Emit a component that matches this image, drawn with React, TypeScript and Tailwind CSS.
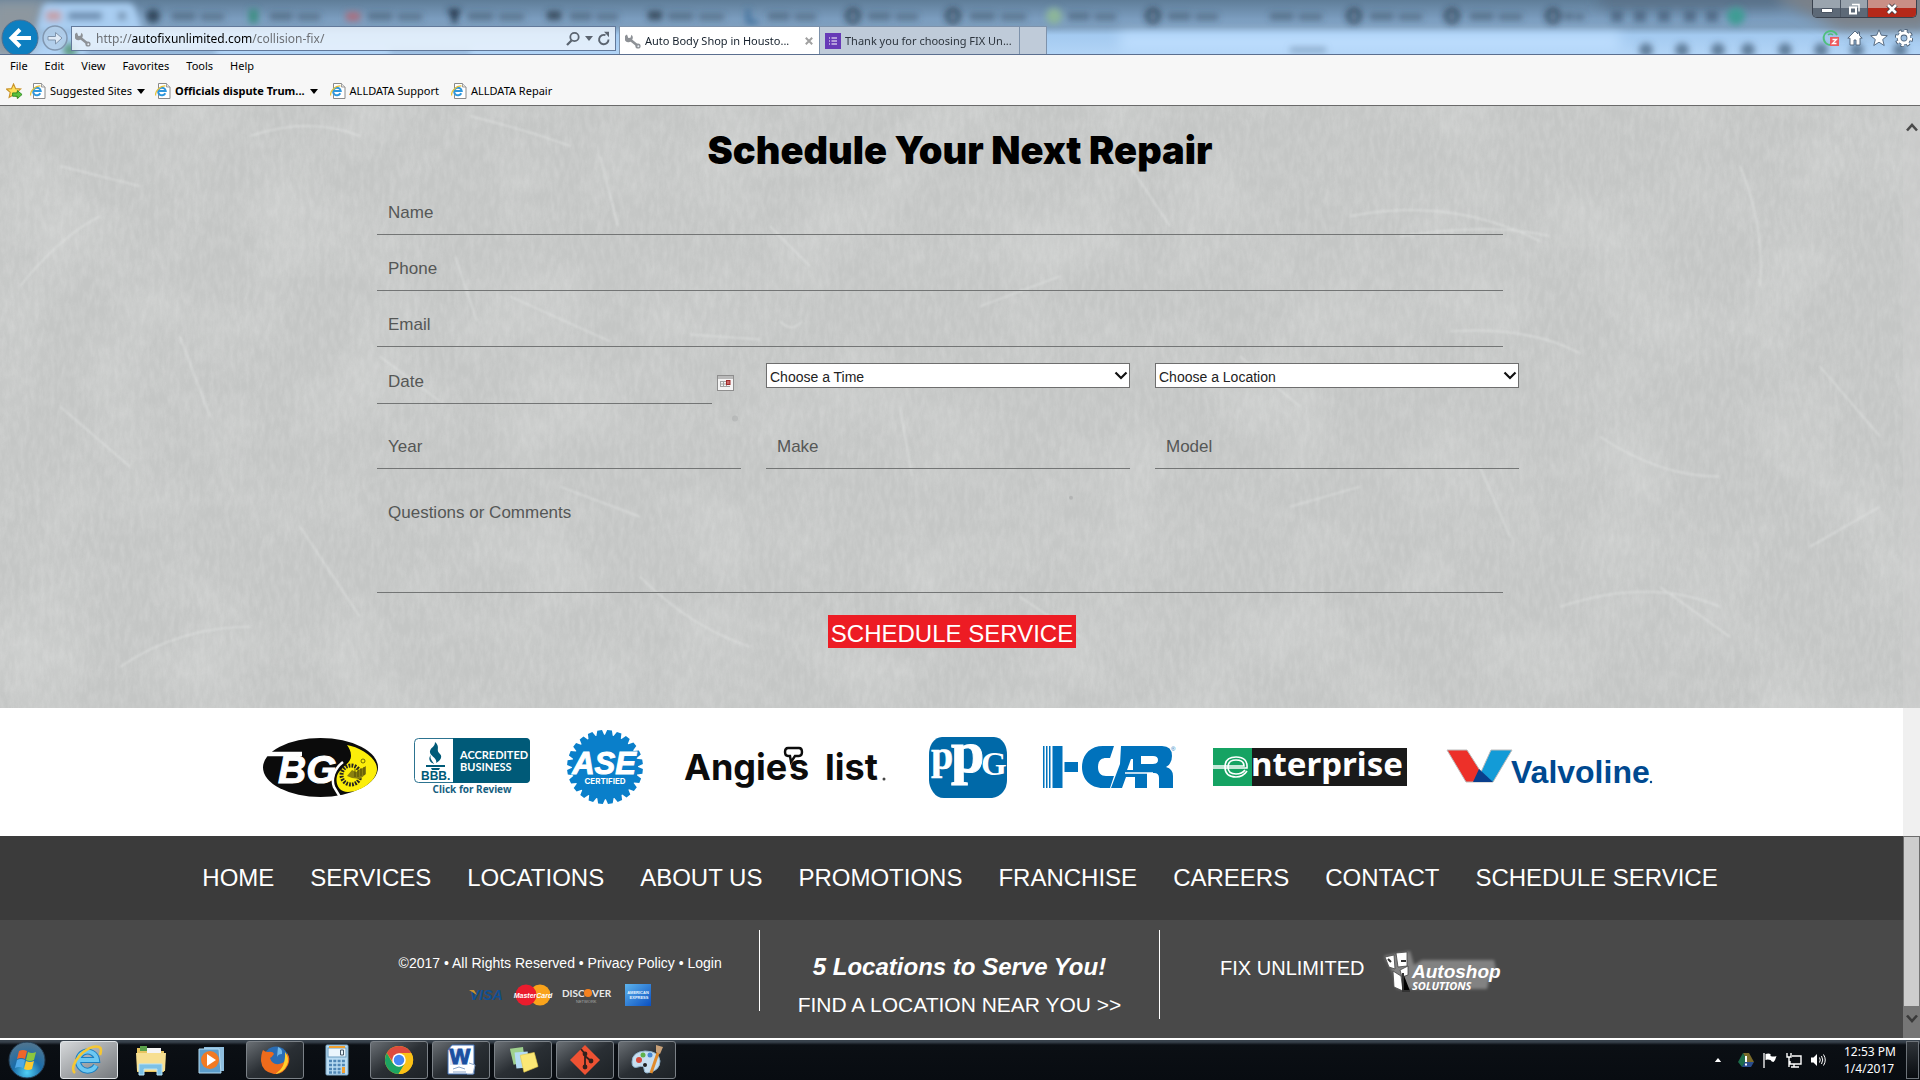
import React from "react";

const UI = "font-['Noto_Sans',sans-serif]";

function Wrench({ className = "" }: { className?: string }) {
  return (
    <svg viewBox="0 0 16 16" className={"h-4 w-4 shrink-0 " + className} aria-hidden="true">
      <path d="M5 6.500l8 6.500" stroke="#8d9196" strokeWidth="2.600" strokeLinecap="round" />
      <path d="M2 1.500a4 4 0 1 0 5 5.500a4 4 0 0 0-.6-5.200l-.9 3-2.200.3z" fill="#8d9196" />
      <circle cx="13" cy="13" r="2.600" fill="#8d9196" />
      <circle cx="13.300" cy="13.200" r="1" fill="#e8eef5" />
    </svg>
  );
}

function IePage() {
  return (
    <svg viewBox="0 0 16 16" className="h-4 w-4 shrink-0" aria-hidden="true">
      <path d="M3.500.5h8l3.500 3.500v11.500H3.500z" fill="#fff" stroke="#8a8a8a" />
      <path d="M11.500.5v3.500H15" fill="#e4e4e4" stroke="#8a8a8a" strokeWidth=".8" />
      <path d="M10.300 10.300a3.800 3.800 0 1 1 .4-2.300H3.500" fill="none" stroke="#2e96dc" strokeWidth="2" />
      <path d="M.8 12.500C-.5 9 5 2.500 10.500 3" fill="none" stroke="#e9c33c" strokeWidth="1.200" />
    </svg>
  );
}

function Caret({ className = "" }: { className?: string }) {
  return (
    <svg viewBox="0 0 8 5" className={"h-[5px] w-2 shrink-0 " + className} aria-hidden="true">
      <path d="M0 0h8L4 5z" fill="currentColor" />
    </svg>
  );
}

/* ---------- browser frame ---------- */

const ghostTabs = [
  { x: 172, w: 52 }, { x: 270, w: 50 }, { x: 368, w: 54 }, { x: 468, w: 56 }, { x: 570, w: 48 },
  { x: 668, w: 56 }, { x: 768, w: 48 }, { x: 868, w: 50 }, { x: 970, w: 56 }, { x: 1068, w: 48 },
  { x: 1168, w: 50 }, { x: 1270, w: 52 }, { x: 1370, w: 52 }, { x: 1470, w: 52 }, { x: 1564, w: 20 },
];

function GlassBackdrop() {
  return (
    <svg className="absolute inset-0 h-full w-full" viewBox="0 0 1920 54" preserveAspectRatio="xMinYMin slice" aria-hidden="true">
      <defs>
        <linearGradient id="glass" x1="0" y1="0" x2="0" y2="1">
          <stop offset="0" stopColor="#5f7d98" />
          <stop offset=".35" stopColor="#7b9dbf" />
          <stop offset=".5" stopColor="#7f9fbe" />
          <stop offset=".65" stopColor="#a3caf0" />
          <stop offset="1" stopColor="#b2d4f6" />
        </linearGradient>
        <filter id="soft" x="-20%" y="-60%" width="140%" height="220%"><feGaussianBlur stdDeviation="3" /></filter>
        <filter id="softer" x="-20%" y="-60%" width="140%" height="220%"><feGaussianBlur stdDeviation="7" /></filter>
      </defs>
      <rect width="1920" height="54" fill="url(#glass)" />
      <g filter="url(#softer)">
        <path d="M-10 0H50L25 60H-10z" fill="#8d979f" />
        <rect x="1600" y="-6" width="180" height="12" fill="#566c82" />
        <path d="M1780 0l60 30h90V-10h-150z" fill="#7b8188" />
        <rect x="1120" y="34" width="500" height="16" fill="#bfdfff" />
      </g>
      <g filter="url(#soft)">
        <path d="M36 32L42 7q2-4 6-4h80q5 0 7 5l8 24z" fill="#a9cdf1" />
        <rect x="46" y="11" width="15" height="10" fill="#c4a0a8" />
        <rect x="68" y="12" width="34" height="8" fill="#6c8cae" />
        <path d="M118 12l8 8m0-8l-8 8" stroke="#4a647e" strokeWidth="2" />
        {ghostTabs.map((t) => (
          <g key={t.x} fill="#3d4f63" opacity=".55">
            <rect x={t.x} y="13" width={t.w * 0.45} height="7" />
            <rect x={t.x + t.w * 0.55} y="14" width={t.w * 0.45} height="6" />
          </g>
        ))}
        <circle cx="153" cy="16" r="7" fill="#24384c" opacity=".85" />
        <rect x="249" y="9" width="9" height="14" fill="#3c8f83" />
        <rect x="346" y="12" width="14" height="9" fill="#a86f80" />
        <path d="M447 9h14l-4 8v6h-5v-6z" fill="#233648" />
        <rect x="547" y="11" width="14" height="9" fill="#2c3b4b" opacity=".8" />
        <rect x="648" y="11" width="14" height="9" fill="#2c3b4b" opacity=".8" />
        <path d="M748 9v13h10" stroke="#3c6c98" strokeWidth="4" fill="none" />
        {[853, 953, 1153, 1354, 1452, 1553].map((x) => (
          <circle key={x} cx={x} cy="16" r="6" fill="none" stroke="#22303f" strokeWidth="4" opacity=".8" />
        ))}
        <circle cx="1054" cy="16" r="8" fill="#8cb59a" />
        {[1617, 1640, 1664, 1690, 1712].map((x) => (
          <rect key={x} x={x - 6} y="11" width="12" height="11" fill="#2e4359" opacity=".5" />
        ))}
        <circle cx="1736" cy="16" r="9" fill="#3f9c94" />
        <rect x="1290" y="47" width="36" height="6" fill="#7c9ab8" opacity=".7" />
        {[1646, 1682, 1718, 1748, 1785, 1821, 1857, 1900].map((x) => (
          <circle key={x} cx={x} cy="50" r="7" fill="#48637e" opacity=".75" />
        ))}
        <circle cx="70" cy="50" r="7" fill="#5f9b84" />
        <rect x="86" y="49" width="130" height="5" fill="#6c8cae" opacity=".7" />
        <rect x="390" y="49" width="80" height="5" fill="#6c8cae" opacity=".5" />
      </g>
    </svg>
  );
}

function BrowserTop() {
  return (
    <div className="relative flex h-[54px] items-end overflow-hidden">
      <GlassBackdrop />
      <div className="relative flex h-[35px] items-start">
        <button aria-label="Back" className="ml-px h-[38px] w-[38px]">
          <svg viewBox="0 0 38 38" className="h-[38px] w-[38px]">
            <circle cx="19" cy="19" r="18" fill="#0e7fc0" stroke="#4f6f90" strokeWidth="1" />
            <path d="M30 19H11m8-8.500L10.500 19l8.500 8.500" fill="none" stroke="#fff" strokeWidth="4" />
          </svg>
        </button>
        <button aria-label="Forward" className="mt-[6px] ml-[3px] h-[26px] w-[26px]">
          <svg viewBox="0 0 26 26" className="h-[26px] w-[26px]">
            <circle cx="13" cy="13" r="12" fill="#b7cee6" fillOpacity=".6" stroke="#8197b0" strokeWidth="1.500" />
            <path d="M6 11.500h7.500V7.500L20 13l-6.500 6v-4H6z" fill="#dfeaf6" stroke="#7f93aa" />
          </svg>
        </button>
      </div>
      <div className={"relative mb-[3px] ml-[3px] flex h-[25px] w-[545px] items-center border border-[#62799a] bg-[#e9f2fc]/85 pr-[3px] pl-[3px] text-[12px] leading-4 " + UI}>
        <Wrench />
        <span className="ml-[5px] flex-1 text-[#6d7075]">
          http://<span className="text-black">autofixunlimited.com</span>/collision-fix/
        </span>
        <button aria-label="Search" className="h-4 w-4">
          <svg viewBox="0 0 16 16" fill="none" stroke="#5b6470" strokeWidth="1.800"><circle cx="9.500" cy="6" r="4.200" /><path d="M6.500 9.500L2 14" strokeWidth="2.300" /></svg>
        </button>
        <Caret className="mr-[3px] ml-1 text-[#5b6470]" />
        <button aria-label="Refresh" className="h-4 w-4">
          <svg viewBox="0 0 16 16" fill="none" stroke="#5b6470" strokeWidth="1.900"><path d="M12.500 8.500A4.700 4.700 0 1 1 9.500 4.200" /><path d="M8 .8h5v5.500z" fill="#5b6470" stroke="none" /></svg>
        </button>
      </div>
      <div className={"relative ml-[3px] flex h-7 items-stretch text-[11px] leading-4 " + UI}>
        <div className="flex w-[201px] items-center border border-b-0 border-[#7d92ab] bg-white pr-[6px] pl-[5px]">
          <Wrench />
          <a href="#tab1" className="ml-1 flex-1 whitespace-nowrap text-[#15202c]">Auto Body Shop in Housto...</a>
          <button aria-label="Close tab" className="h-2 w-2">
            <svg viewBox="0 0 10 10" stroke="#a0a0a0" strokeWidth="2.500"><path d="M1 1l8 8M9 1L1 9" /></svg>
          </button>
        </div>
        <div className="flex w-[200px] items-center border-t border-r border-[#7d92ab] bg-[#bfcbd9] pl-[5px]">
          <svg viewBox="0 0 16 16" className="h-4 w-4 shrink-0" aria-hidden="true">
            <rect width="16" height="16" fill="#673ab7" />
            <path d="M6.500 5H12M6.500 8H12M6.500 11H12M4 5h1M4 8h1M4 11h1" stroke="#fff" strokeWidth="1.200" />
          </svg>
          <a href="#tab2" className="ml-1 whitespace-nowrap text-[#2c343d]">Thank you for choosing FIX Un...</a>
        </div>
        <button aria-label="New tab" className="w-[27px] border-t border-r border-[#7d92ab] bg-[#bfcbd9]" />
      </div>
      <div className="relative ml-auto flex h-[54px] flex-col items-end pr-[3px]">
        <div className="flex h-[18px] overflow-hidden rounded-b-[5px] border border-t-0 border-[#39414d]">
          <button aria-label="Minimize" className="flex w-7 items-center justify-center border-r border-[#4b5563] bg-linear-to-b from-[#9aa4ae] from-50% to-[#5d6977] to-50%">
            <svg viewBox="0 0 12 12" className="h-3 w-3"><path d="M.5 5.500h11v4H.5z" fill="#fff" stroke="#4b5563" /></svg>
          </button>
          <button aria-label="Restore" className="flex w-[27px] items-center justify-center border-r border-[#4b5563] bg-linear-to-b from-[#9aa4ae] from-50% to-[#5d6977] to-50%">
            <svg viewBox="0 0 12 12" className="h-3 w-3"><path d="M4 1.500h7v7" fill="none" stroke="#fff" strokeWidth="1.500" /><path d="M2 4.500h6v6H2z" fill="none" stroke="#fff" strokeWidth="2" /></svg>
          </button>
          <button aria-label="Close" className="flex w-12 items-center justify-center bg-linear-to-b from-[#c98f86] from-50% to-[#b5291a] to-50%">
            <svg viewBox="0 0 12 12" className="h-3 w-3"><path d="M2 2l8 8M10 2l-8 8" stroke="#3d3d46" strokeWidth="4.500" /><path d="M2 2l8 8M10 2l-8 8" stroke="#fff" strokeWidth="2.700" /></svg>
          </button>
        </div>
        <div className="mt-[11px] flex items-center gap-[7px] pr-1">
          <button aria-label="Extension">
            <svg viewBox="0 0 18 18" className="h-[18px] w-[18px]"><path d="M15 6A7 7 0 1 0 9 16" fill="none" stroke="#4fbf7c" strokeWidth="2" /><path d="M6 6a4 4 0 0 1 5 0" stroke="#4fbf7c" fill="none" strokeWidth="1.500" /><rect x="8" y="8" width="9" height="9" fill="#ec5b60" /><path d="M10.500 10.500h4l-4 4h4" fill="none" stroke="#fff" strokeWidth="1.300" /></svg>
          </button>
          <button aria-label="Home">
            <svg viewBox="0 0 16 16" className="h-4 w-4"><path d="M8 1L.8 8.200H3V15h4v-5h2v5h4V8.200h2.200L12.500 5.500V2H11v2z" fill="#fff" stroke="#4c6077" strokeWidth=".9" /></svg>
          </button>
          <button aria-label="Favorites">
            <svg viewBox="0 0 18 18" className="h-[18px] w-[18px]"><path d="M9 .8l2.300 5.400 6 .5-4.600 3.800 1.500 6L9 13.200l-5.200 3.300 1.500-6L.7 6.700l6-.5z" fill="#fff" stroke="#4c6077" strokeWidth=".9" /></svg>
          </button>
          <button aria-label="Tools">
            <svg viewBox="0 0 18 18" className="h-[18px] w-[18px]"><circle cx="9" cy="9" r="7.200" fill="none" stroke="#4c6077" strokeWidth="4" strokeDasharray="3.200 2.450" /><circle cx="9" cy="9" r="4.900" fill="none" stroke="#4c6077" strokeWidth="4.600" /><circle cx="9" cy="9" r="7" fill="none" stroke="#fff" strokeWidth="2.400" strokeDasharray="2.500 3" /><circle cx="9" cy="9" r="4.900" fill="none" stroke="#fff" strokeWidth="3" /></svg>
          </button>
        </div>
      </div>
    </div>
  );
}

function MenuAndFavorites() {
  return (
    <div className={"border-t border-b border-t-[#5b6f8f] border-b-[#6a6a6a] bg-[#f7f7f7] text-[11px] text-black " + UI}>
      <nav aria-label="Menu bar" className="flex h-[22px] items-center gap-[17px] pl-[10px]">
        {["File", "Edit", "View", "Favorites", "Tools", "Help"].map((m) => (
          <button key={m}>{m}</button>
        ))}
      </nav>
      <nav aria-label="Favorites bar" className="flex h-7 items-center pl-[6px]">
        <svg viewBox="0 0 18 18" className="mr-[7px] h-[17px] w-[17px]" aria-hidden="true">
          <path d="M8 1l2.200 5 5.300.4-4 3.500 1.200 5.300L8 12.500l-4.700 2.700 1.200-5.300-4-3.500L5.800 6z" fill="#ffe15a" stroke="#c9932a" strokeWidth="1.200" />
          <path d="M7 10.500h5V8l5 4.200-5 4.300V14H7z" fill="#5cc23d" stroke="#2f8a24" />
        </svg>
        <a href="#suggested" className="mr-[10px] flex items-center gap-1"><IePage />Suggested Sites<Caret className="ml-px" /></a>
        <a href="#officials" className="mr-3 flex items-center gap-1 font-bold"><IePage />Officials dispute Trum...<Caret className="ml-px" /></a>
        <a href="#support" className="mr-3 flex items-center gap-1"><IePage />ALLDATA Support</a>
        <a href="#repair" className="flex items-center gap-1"><IePage />ALLDATA Repair</a>
      </nav>
    </div>
  );
}

/* ---------- form ---------- */

function Concrete() {
  return (
    <svg className="absolute inset-0 h-full w-full" aria-hidden="true" preserveAspectRatio="none" viewBox="0 0 1920 601">
      <defs>
        <filter id="grain" x="0" y="0" width="100%" height="100%">
          <feTurbulence type="fractalNoise" baseFrequency=".2 .07" numOctaves="4" seed="8" />
          <feColorMatrix values="0 0 0 0 1  0 0 0 0 1  0 0 0 0 1  .8 0 0 0 -.25" />
        </filter>
        <filter id="cloud" x="0" y="0" width="100%" height="100%">
          <feTurbulence type="fractalNoise" baseFrequency=".012" numOctaves="5" seed="3" />
          <feColorMatrix values="0 0 0 0 .9  0 0 0 0 .91  0 0 0 0 .9  1.800 0 0 0 -.75" />
        </filter>
        <filter id="scratch"><feGaussianBlur stdDeviation=".8" /></filter>
      </defs>
      <rect width="1920" height="601" fill="#c4c6c5" />
      <rect width="1920" height="601" filter="url(#cloud)" opacity=".22" />
      <rect width="1920" height="601" filter="url(#grain)" opacity=".32" />
      <g fill="none" stroke="#e6e8e7" strokeWidth="1.500" opacity=".6" filter="url(#scratch)">
        <path d="M470 10q60 15 100 30M20 180q40-50 80-70M60 300l70 60M380 250l60 45M455 150l22 65M600 50l18 70M510 190l100 45M690 228l70 5M780 215q12 12 22 0M1350 110q100-20 190 25M1400 130q90-14 150 0M1450 225q80-5 130 22M1600 330q60 40 120 40M1240 250l60 50M1740 60q25 60 20 120M1020 490l60 40M880 540q60-30 130-22M640 470q50 50 110 70M120 560q60-40 130-40M1560 500q90-30 160 0M900 300l12 70M1660 480l70 50M250 30q60-20 110 0M300 420l60 90M560 380l80 30M1130 60l40 60M1290 400l70-20M1480 360l30 70M60 60l80 20M180 230l30 80M1820 260l60 70M1810 440l70-40M770 120l40 40M980 200l80-30" />
      </g>
      <g fill="#a9abab"><circle cx="735" cy="312" r="3" opacity=".5" /><circle cx="1071" cy="391" r="2" opacity=".7" /></g>
    </svg>
  );
}

const fieldBase = "block h-14 border-b border-[#737575] bg-transparent pt-[13px] pl-[11px] text-[17px] text-[#333] outline-none placeholder:text-[#555756] placeholder:opacity-100";

function Select({ label }: { label: string }) {
  return (
    <div className="relative mt-[15px] h-[25px]">
      <select aria-label={label} className="h-[25px] w-full appearance-none border border-[#6e6e6e] bg-white pt-[3px] pl-[3px] text-[14px] text-[#222]">
        <option>{label}</option>
      </select>
      <svg viewBox="0 0 14 9" className="pointer-events-none absolute top-2 right-[2px] h-[9px] w-[14px]" aria-hidden="true">
        <path d="M1.500 1.500L7 7l5.500-5.500" fill="none" stroke="#111" strokeWidth="2.200" />
      </svg>
    </div>
  );
}

function RepairForm() {
  return (
    <section className="relative overflow-hidden">
      <Concrete />
      <form className="relative pt-5 pb-[59px]" onSubmit={(e) => e.preventDefault()}>
        <h1 className="text-center font-['Inter',sans-serif] text-[38px] leading-[48px] font-black text-black">Schedule Your Next Repair</h1>
        <div className="pr-6">
          <div className="mx-auto mt-[5px] max-w-[1142px]">
            <div className="pr-4">
              <input aria-label="Name" placeholder="Name" className={fieldBase + " w-full"} />
              <input aria-label="Phone" type="tel" placeholder="Phone" className={fieldBase + " w-full"} />
              <input aria-label="Email" type="email" placeholder="Email" className={fieldBase + " w-full"} />
            </div>
            <div className="mt-px grid grid-cols-3 gap-x-[25px]">
              <div className="flex">
                <input aria-label="Date" placeholder="Date" className={fieldBase + " w-[335px]"} />
                <button type="button" aria-label="Pick a date" className="mt-[27px] ml-[5px] h-4 w-[17px]">
                  <svg viewBox="0 0 17 16"><rect x=".5" y=".5" width="16" height="15" fill="#f4f4f4" stroke="#8e8e8e" /><path d="M1 1h15v3H1z" fill="#b9b9b9" /><path d="M3 6.500h10M3 9h10M3 11.500h10M3.500 6v6M6.500 6v6M9.500 6v6" stroke="#a2a2a2" /><rect x="9.500" y="5.500" width="3.500" height="4" fill="#c66" stroke="#9d2a2a" /></svg>
                </button>
              </div>
              <Select label="Choose a Time" />
              <Select label="Choose a Location" />
            </div>
            <div className="mt-[9px] grid grid-cols-3 gap-x-[25px]">
              <input aria-label="Year" placeholder="Year" className={fieldBase} />
              <input aria-label="Make" placeholder="Make" className={fieldBase} />
              <input aria-label="Model" placeholder="Model" className={fieldBase} />
            </div>
            <div className="mt-6 pr-4">
              <textarea aria-label="Questions or Comments" placeholder="Questions or Comments" className="block h-[100px] w-full resize-none border-b border-[#737575] bg-transparent pt-[8px] pl-[11px] text-[17px] leading-6 outline-none placeholder:text-[#555756] placeholder:opacity-100" />
            </div>
          </div>
        </div>
        <div className="mt-[22px] pr-4 text-center">
          <button type="submit" className="h-[33px] bg-[#ed1c24] px-[3px] pt-1 text-[24px] leading-[29px] text-white">SCHEDULE SERVICE</button>
        </div>
      </form>
    </section>
  );
}

/* ---------- partner logos ---------- */

function gear(cx: number, cy: number, rx: number, ry: number, n: number) {
  const pts: string[] = [];
  for (let i = 0; i < n; i++) {
    [[0, 0.87], [0.22, 1], [0.7, 1], [0.9, 0.87]].forEach(([o, k]) => {
      const a = ((i + o) / n) * Math.PI * 2;
      pts.push((cx + Math.cos(a) * rx * k).toFixed(1) + "," + (cy + Math.sin(a) * ry * k).toFixed(1));
    });
  }
  return pts.join(" ");
}

function Logos() {
  return (
    <section aria-label="Partners" className="bg-white pt-[22px] pr-1 pb-8">
      <div className="mx-auto flex max-w-[1390px] items-center justify-between">
        <svg viewBox="0 0 115 59" className="h-[59px] w-[115px]" role="img" aria-label="BG">
          <ellipse cx="57.500" cy="29.500" rx="57.500" ry="29.500" fill="#0b0b0b" />
          <path d="M84 7c12 2 30 12 30 24S97 54 85 54c-9 0-13-8-11-16 3-9 14-12 14-20 0-5-2-8-4-11z" fill="#fcee0a" />
          <path d="M80 24c-9 7-12 17-9 25l6 10" stroke="#fff" strokeWidth="2.500" fill="none" />
          <circle cx="88" cy="37" r="9.500" fill="none" stroke="#222" strokeWidth="4" strokeDasharray="1.800 1.200" />
          <path d="M84 38l5-6 4 2 10-6v8l-6 5-8-1z" fill="#8a7f10" />
          <path d="M92 31v8M95 30v9M98 30v8M101 29v8" stroke="#3d3a00" strokeWidth=".8" />
          <circle cx="100" cy="23" r="2" fill="none" stroke="#3d3a00" strokeWidth=".7" />
          <path d="M3 16h36" stroke="#fff" strokeWidth="4.500" />
          <text x="15" y="45" fontSize="39" fontWeight="bold" fontStyle="italic" fontFamily="Liberation Sans" fill="#fff" stroke="#fff" strokeWidth="1">BG</text>
        </svg>

        <svg viewBox="0 0 116 58" className="h-[58px] w-[116px]" role="img" aria-label="BBB Accredited Business, click for review">
          <rect x=".5" y=".5" width="115" height="44" rx="4" fill="#fff" stroke="#2c7390" />
          <path d="M39 0h73a4 4 0 0 1 4 4v37a4 4 0 0 1-4 4H39z" fill="#005a78" />
          <path d="M21 4c6 5 0 8 5 12 3 3 0 7-4 9 2-5-7-7-6-12 1-4 5-4 5-9zM17 17c-2 4 2 6 3 9-5-2-6-6-3-9zM12 27h19v2H12zM17 30h9l-1 2h-7z" fill="#005a78" />
          <text x="7" y="42" fontSize="12" fontWeight="bold" fontFamily="Liberation Sans" fill="#005a78">BBB.</text>
          <text x="46" y="21" fontSize="11" fontWeight="bold" fontFamily="Lato" fill="#fff">ACCREDITED</text>
          <text x="46" y="33" fontSize="11" fontWeight="bold" fontFamily="Lato" fill="#fff">BUSINESS</text>
          <text x="58" y="55" textAnchor="middle" fontSize="10" fontWeight="bold" fontFamily="Noto Sans" fill="#17607f">Click for Review</text>
        </svg>

        <svg viewBox="0 0 76 74" className="h-[74px] w-[76px]" role="img" aria-label="ASE Certified">
          <polygon points={gear(38, 37, 38, 37, 24)} fill="#0a7fca" />
          <text x="37" y="44" textAnchor="middle" fontSize="31" fontWeight="bold" fontStyle="italic" fontFamily="Liberation Sans" fill="#fff" stroke="#fff">ASE</text>
          <text x="38" y="54" textAnchor="middle" fontSize="8" fontWeight="bold" fontFamily="Inter" fill="#fff">CERTIFIED</text>
        </svg>

        <svg viewBox="0 0 214 42" className="h-[42px] w-[214px] overflow-visible" role="img" aria-label="Angie's list">
          <g fontSize="36" fontWeight="bold" fontFamily="Inter" fill="#0c0c0c">
            <text x="5" y="34">Angie</text>
            <text x="110" y="34">s</text>
            <text x="146" y="34">list</text>
          </g>
          <path d="M109 2h11q3 0 3 4t-3 4h-4l-4 6-1-6h-2q-3 0-3-4t3-4z" fill="#fff" stroke="#0c0c0c" strokeWidth="2.400" />
          <circle cx="205" cy="33" r="1.500" fill="#444" />
        </svg>

        <svg viewBox="0 0 78 61" className="h-[61px] w-[78px] overflow-visible" role="img" aria-label="PPG">
          <path d="M13 0h52q6 0 10 6 3 5 3 12v25q0 7-4 12t-11 6H15q-7 0-11-6T0 43V18Q0 11 3 6 7 0 13 0z" fill="#0069a8" />
          <g fontFamily="Liberation Serif" fontWeight="bold" fill="#fff" stroke="#fff">
            <text x="2" y="32" fontSize="40" strokeWidth=".5">p</text>
            <text x="22" y="35" fontSize="60" strokeWidth="1">p</text>
            <text x="52" y="38" fontSize="33" strokeWidth="0">G</text>
          </g>
        </svg>

        <svg viewBox="0 0 133 42" className="h-[42px] w-[133px] overflow-visible" role="img" aria-label="I-CAR" fill="#0072bc">
          <path d="M0 0h1.500v42H0zM3 0h1.500v42H3zM6 0h1.500v42H6zM9.500 0h10v42h-10zM21.500 16h13.500v10H21.500z" />
          <path d="M71 0H60C47 0 39 9 39 21s8 21 21 21h7l4-12h-8c-5 0-8-3-8-9s3-9 8-9h4z" />
          <path d="M78 0h20v23h6v19H92V31h-9l-4 11H68l9-24z" />
          <path d="M88 13l-4 11h6V13z" fill="#fff" />
          <path d="M96 0h23q10 0 10 10 0 8-6 11 7 2 7 9v12h-14V32q0-5-5-5H98V18h12q5 0 5-4t-5-4H96z" />
          <path d="M82 27h28" stroke="#fff" strokeWidth="1.500" />
          <text x="128" y="5" fontSize="6" fontFamily="Liberation Sans">®</text>
        </svg>

        <svg viewBox="0 0 194 38" className="h-[38px] w-[194px] overflow-visible" role="img" aria-label="Enterprise">
          <rect width="194" height="38" fill="#1a1a1a" />
          <rect width="39" height="38" fill="#15a363" />
          <path d="M0 18h31q0-6-8-6t-8 7 8 7q6 0 9-4M0 20h34q1-11-11-11-11 0-11 10t11 10q7 0 11-6" fill="none" stroke="#fff" strokeWidth="1.600" />
          <text x="38" y="28" fontSize="33" fontWeight="bold" fontFamily="Noto Sans" fill="#fff">nterprise</text>
        </svg>

        <svg viewBox="0 0 210 36" className="h-9 w-[210px] overflow-visible" role="img" aria-label="Valvoline">
          <path d="M4 1h20l14 22-7 10h-8z" fill="#ed3029" stroke="#bbb" />
          <path d="M48 1h21L50 33H31l7-10z" fill="#139bd7" stroke="#bbb" />
          <path d="M36 20l14 13H30z" fill="#0a3f8c" />
          <text x="68" y="34" fontSize="32" fontWeight="bold" fontFamily="Liberation Sans" fill="#004990">Valvoline</text>
          <circle cx="208" cy="33" r="1.200" fill="#004990" />
        </svg>
      </div>
    </section>
  );
}

/* ---------- site footer ---------- */

const links = ["HOME", "SERVICES", "LOCATIONS", "ABOUT US", "PROMOTIONS", "FRANCHISE", "CAREERS", "CONTACT", "SCHEDULE SERVICE"];

function SiteFooter() {
  return (
    <footer className="flex flex-1 flex-col bg-[#494949] text-white">
      <nav aria-label="Site" className="flex h-21 items-center justify-center gap-9 bg-[#3b3b3b] text-[24px]">
        {links.map((l) => (
          <a key={l} href={"#" + l.toLowerCase().replace(" ", "-")} className="whitespace-nowrap">{l}</a>
        ))}
      </nav>
      <div className="mx-auto grid w-full max-w-[1198px] grid-cols-3 items-start pt-[10px]">
        <div className="h-[81px] border-r border-white pt-[23px] text-center">
          <p className="text-[14px] leading-5 whitespace-nowrap">©2017 • All Rights Reserved • <a href="#privacy">Privacy Policy</a> • <a href="#login">Login</a></p>
          <div className="mt-[11px] flex items-center justify-center gap-3">
            <svg viewBox="0 0 34 14" className="h-[14px] w-[34px] overflow-visible" role="img" aria-label="Visa">
              <text x="1" y="12" fontSize="14" fontWeight="bold" fontStyle="italic" fontFamily="Liberation Sans" fill="#0f4f93">VISA</text>
              <path d="M0 2h5l3 5z" fill="#c9932e" />
            </svg>
            <svg viewBox="0 0 36 22" className="h-[22px] w-9 overflow-visible" role="img" aria-label="MasterCard">
              <circle cx="25" cy="11" r="10.500" fill="#f9a31b" /><circle cx="11" cy="11" r="10.500" fill="#eb1c2d" />
              <text x="18" y="14" textAnchor="middle" fontSize="7" fontWeight="bold" fontStyle="italic" fontFamily="Liberation Sans" fill="#fff">MasterCard</text>
            </svg>
            <svg viewBox="0 0 48 16" className="h-4 w-12 overflow-visible" role="img" aria-label="Discover Network">
              <text x="-1" y="10" fontSize="10" fontWeight="bold" fontFamily="Lato" fill="#e8e8e8">DISC</text>
              <circle cx="25" cy="6" r="4" fill="#f58220" />
              <text x="29" y="10" fontSize="10" fontWeight="bold" fontFamily="Lato" fill="#e8e8e8">VER</text>
              <text x="13" y="16" fontSize="4" fontFamily="Liberation Sans" fill="#aaa">NETWORK</text>
            </svg>
            <svg viewBox="0 0 26 22" className="ml-[2px] h-[22px] w-[26px]" role="img" aria-label="American Express">
              <defs><linearGradient id="amex" x2="1" y2="1"><stop stopColor="#5db4ee" /><stop offset="1" stopColor="#0a4fc0" /></linearGradient></defs>
              <rect width="26" height="22" fill="url(#amex)" />
              <text x="13" y="10" textAnchor="middle" fontSize="4" fontWeight="bold" fontFamily="Liberation Sans" fill="#e6f3ff">AMERICAN</text>
              <text x="14" y="15" textAnchor="middle" fontSize="4" fontWeight="bold" fontFamily="Liberation Sans" fill="#e6f3ff">EXPRESS</text>
            </svg>
          </div>
        </div>
        <div className="h-[89px] border-r border-white pt-[22px] text-center">
          <p className="text-[24px] leading-[30px] font-bold whitespace-nowrap italic">5 Locations to Serve You!</p>
          <a href="#locations" className="mt-2 block text-[21px] leading-[30px] whitespace-nowrap">FIND A LOCATION NEAR YOU &gt;&gt;</a>
        </div>
        <div className="flex items-center justify-center gap-[18px] pt-[17px]">
          <span className="pb-2 text-[20px] leading-7 whitespace-nowrap">FIX UNLIMITED</span>
          <svg viewBox="0 0 116 50" className="h-[50px] w-[116px] overflow-visible" role="img" aria-label="Autoshop Solutions">
            <defs><filter id="glow" x="-10%" y="-20%" width="120%" height="140%"><feGaussianBlur stdDeviation="1.500" /></filter></defs>
            <g filter="url(#glow)" opacity=".6" fill="#a8a8a8">
              <path d="M1 9l26-5 4 14 8-5h72l3 14-8 6-2 9H14l-4-16z" />
            </g>
            <path d="M2 10l9-2 1 14-6-2zM13 6l11-1v14l-9 1zM10 24l8 5 2 15-9-4zM17 23l8-4v9l-6 2z" fill="#fff" stroke="#444" strokeWidth=".8" />
            <path d="M5 12l3 3M18 14h5M20 26v18h7" stroke="#333" strokeWidth="2" />
            <text x="29" y="31" fontSize="19" fontWeight="bold" fontStyle="italic" fontFamily="Liberation Sans" fill="#fff">Autoshop</text>
            <text x="29" y="43" fontSize="11" fontWeight="bold" fontStyle="italic" fontFamily="Noto Sans" fill="#fff">SOLUTIONS</text>
          </svg>
        </div>
      </div>
    </footer>
  );
}

function Scrollbar() {
  return (
    <div className="absolute inset-y-0 right-0 flex w-[17px] flex-col items-center bg-[#d1d1d1]/33" aria-hidden="true">
      <svg viewBox="0 0 12 9" className="mt-[17px] h-[9px] w-3"><path d="M1 7.500L6 2l5 5.500" fill="none" stroke="#4a4a4a" strokeWidth="2.600" /></svg>
      <div className="flex-1" />
      <div className="h-[169px] w-[15px] bg-[#cdcdcd]" />
      <svg viewBox="0 0 12 9" className="mt-2 mb-[15px] h-[9px] w-3"><path d="M1 1.500L6 7l5-5.500" fill="none" stroke="#3a3a3a" strokeWidth="2.600" /></svg>
    </div>
  );
}

/* ---------- taskbar ---------- */

function TaskButton({ label, active, children }: { label: string; active?: boolean; children: React.ReactNode }) {
  return (
    <button
      aria-label={label}
      className={
        "flex h-[38px] w-[58px] items-center justify-center rounded-[3px] border " +
        (active
          ? "border-[#dfe3e6] bg-linear-to-br from-[#d6d8da] to-[#75797d] pr-1"
          : "border-[#7b8187] bg-linear-to-br from-[#6b7075] via-[#2a2f34] to-[#1d2226]")
      }
    >
      {children}
    </button>
  );
}

function Taskbar() {
  return (
    <div className="flex h-[42px] items-center border-t-2 border-t-white bg-linear-to-b from-[#38424c] from-[2px] via-[#0b0f14] via-[5px] to-[#080c11]">
      <button aria-label="Start" className="ml-2 h-[38px] w-[38px]">
        <svg viewBox="0 0 38 38">
          <defs><radialGradient id="orb" cx=".5" cy=".85" r=".8"><stop stopColor="#4fd0f5" /><stop offset=".5" stopColor="#1c6ca8" /><stop offset="1" stopColor="#4e7590" /></radialGradient></defs>
          <circle cx="19" cy="19" r="18" fill="url(#orb)" stroke="#243c52" />
          <path d="M11 10q4-2 8 0l-2 8q-4-2-8 0z" fill="#f0652a" /><path d="M20 11q4 2 8 0l-2 8q-4 2-8 0z" fill="#8cc63e" />
          <path d="M9 19q4-2 8 0l-2 8q-4-2-8 0z" fill="#4fa9e8" /><path d="M18 20q4 2 8 0l-2 8q-4 2-8 0z" fill="#fcc92f" />
        </svg>
      </button>
      <div className="ml-[14px] flex items-center">
        <TaskButton label="Internet Explorer" active>
          <svg viewBox="0 0 32 32" className="h-8 w-8"><path d="M25 21.500a9.500 9.500 0 1 1 1-5.500H9" fill="none" stroke="#1d7fc0" strokeWidth="6" /><path d="M25 21.500a9.500 9.500 0 1 1 1-5.500H9" fill="none" stroke="#6cc8f2" strokeWidth="4" /><path d="M4 29C-4 22 16-1 28 3c3 1 2 5 1 8" fill="none" stroke="#f5c734" strokeWidth="2.600" /></svg>
        </TaskButton>
        <button aria-label="File Explorer" className="ml-[14px] flex w-[38px] justify-center">
          <svg viewBox="0 0 34 32" className="h-8 w-[34px]"><path d="M3 4h12l2 3h13v21H3z" fill="#e8c560" /><path d="M6 2h7v5H6z" fill="#5aa14b" /><path d="M13 4h14v5H13z" fill="#f4f4f4" /><path d="M2 9h30l-1 18H3z" fill="#f7df91" /><path d="M5 31V20h23v11h-5v-6H10v6z" fill="#7cc1e6" stroke="#b8e2f6" /></svg>
        </button>
        <button aria-label="Media Player" className="ml-[23px] flex w-[38px] justify-center">
          <svg viewBox="0 0 28 30" className="h-[30px] w-7"><path d="M6 2h20v24H6z" fill="#8fbede" /><path d="M1 4h20l2 24H1z" fill="#5c9dca" stroke="#b5dcf2" /><circle cx="12" cy="15" r="9" fill="#f17a22" /><path d="M9 9l9 6-9 6z" fill="#fff" /></svg>
        </button>
      </div>
      <div className="ml-[15px] flex items-center gap-1">
        <TaskButton label="Firefox">
          <svg viewBox="0 0 32 32" className="h-8 w-8"><circle cx="17" cy="15" r="12.500" fill="#2a6db5" /><path d="M19 3q5 2 4 7-4 0-5 3z" fill="#72b8e8" /><path d="M4 6q2 2 5 2 5-1 6 2-2 3-4 4 2 7 9 6 8-1 8-11 4 5 1 12-5 10-14 9Q3 28 2 17 2 10 4 6z" fill="#ee6b1c" /><path d="M26 8q5 6 2 13-4 8-12 9 11-6 10-22z" fill="#ffd02e" /></svg>
        </TaskButton>
        <button aria-label="Calculator" className="flex w-[58px] justify-center">
          <svg viewBox="0 0 24 32" className="h-8 w-6"><rect x="1" y="1" width="22" height="30" rx="1" fill="#b9dcf3" stroke="#7ea8c6" /><rect x="3" y="4" width="18" height="9" fill="#eaf6fd" stroke="#6a9cc0" /><path d="M4 3h16" stroke="#f0a030" strokeWidth="2" /><path d="M15.500 6h3v5h-3z" fill="none" stroke="#456" /><path d="M4 17h16M4 21h16M4 25h16M4 28.500h16" stroke="#4f86b5" strokeWidth="2.500" strokeDasharray="3 1.300" /><path d="M17 23h3v6h-3z" fill="#f0a030" /></svg>
        </button>
        <TaskButton label="Chrome">
          <svg viewBox="0 0 32 32" className="h-[30px] w-[30px]"><circle cx="16" cy="16" r="15" fill="#fbc116" /><path d="M3 8.500A15 15 0 0 1 29 8.500H16L10 19z" fill="#dd4b3e" /><path d="M3 8.500A15 15 0 0 0 15.500 31L22 20l-6 3-7-4z" fill="#1da462" /><path d="M16 8.500h13A15 15 0 0 1 15.500 31L23 19z" fill="#fbc116" /><circle cx="16" cy="16" r="7.200" fill="#fff" /><circle cx="16" cy="16" r="5.600" fill="#4587f3" /></svg>
        </TaskButton>
        <TaskButton label="Word">
          <svg viewBox="0 0 32 32" className="h-8 w-8"><path d="M7 1h22v29H3V6z" fill="#fff" stroke="#3f6fb5" /><path d="M5 5h18v16H5z" fill="#dce9f8" /><text x="15" y="20" textAnchor="middle" fontSize="22" fontWeight="bold" fontFamily="Liberation Sans" fill="#1b4fa0" stroke="#1b4fa0">W</text><path d="M8 25l6-2 6 2M8 28h13M24 19l6 2-2 9h-6" stroke="#8ba5c8" fill="#fff" /></svg>
        </TaskButton>
        <TaskButton label="Sticky Notes">
          <svg viewBox="0 0 34 32" className="h-[30px] w-8"><path d="M3 4l14-2 2 16-12 3z" fill="#9fd08d" /><path d="M8 8l14-1 1 17-13 1z" fill="#b4dcf4" /><path d="M14 11l15-3 4 15-15 6z" fill="#fbe775" stroke="#e4c94c" strokeWidth=".7" /></svg>
        </TaskButton>
        <TaskButton label="Git">
          <svg viewBox="0 0 32 32" className="h-8 w-8"><path d="M16 1l15 15-15 15L1 16z" fill="#ee5233" /><path d="M12 5l4 5v14M16 12l6 5" stroke="#33201c" strokeWidth="1.800" fill="none" /><circle cx="16" cy="10" r="2.400" fill="#33201c" /><circle cx="16" cy="23" r="2.400" fill="#33201c" /><circle cx="22" cy="17" r="2.400" fill="#33201c" /></svg>
        </TaskButton>
        <TaskButton label="Paint">
          <svg viewBox="0 0 34 32" className="h-8 w-[34px]"><path d="M2 18Q2 8 15 7q14 0 15 10 0 10-13 12-3 0-3-4t-6-2-6-5z" fill="#c7dff0" stroke="#8fb3cc" /><circle cx="9" cy="16" r="3" fill="#d94b3b" /><circle cx="13" cy="11" r="2.500" fill="#5eb24c" /><circle cx="20" cy="11" r="2.500" fill="#4787cf" /><circle cx="15" cy="21" r="2" fill="#222" /><path d="M29 6l-8 23" stroke="#e08b2c" strokeWidth="3" /><path d="M26 1l7 2-3 7-4-2z" fill="#c9a178" /></svg>
        </TaskButton>
      </div>
      <div className="ml-auto flex items-center text-white">
        <svg viewBox="0 0 8 5" className="mr-4 h-1 w-2" aria-hidden="true"><path d="M0 5h8L4 0z" fill="#fff" /></svg>
        <svg viewBox="0 0 16 16" className="mr-2 h-4 w-4" role="img" aria-label="Drive"><path d="M5 1h6l5 9H9z" fill="#7a6a2a" /><path d="M5 1l4 7-5 7-4-5z" fill="#1c6b4a" /><path d="M4 15l3-5h9l-3 5z" fill="#2a4d8c" /><path d="M8 4v6M8 11.500v2" stroke="#fff" strokeWidth="2" /></svg>
        <svg viewBox="0 0 16 16" className="mr-2 h-4 w-4" role="img" aria-label="Action Center"><path d="M2 1v15" stroke="#fff" strokeWidth="1.300" /><path d="M3.500 2q3-1 5 0v2q3 1 6 0-1 4-3 6-2 0-3-2-3-1-5 0z" fill="#fff" /></svg>
        <svg viewBox="0 0 16 16" className="mr-2 h-4 w-4" role="img" aria-label="Network" fill="none" stroke="#fff" strokeWidth="1.400"><path d="M6 4h9v8H4V9M8 12v2.500M5 15h8M1 1v4h4V1M3 5v10" /></svg>
        <svg viewBox="0 0 16 16" className="mr-[18px] h-4 w-4" role="img" aria-label="Volume"><path d="M1 5.500h2.500L7 2v12l-3.500-3.500H1z" fill="#fff" /><path d="M9.500 5.500q1.500 2.500 0 5M11.500 4q2.500 4 0 8M13.500 2.500q3.500 5.500 0 11" fill="none" stroke="#fff" /></svg>
        <div className={"w-[50px] text-center text-[12px] leading-[17px] whitespace-nowrap " + UI}>
          <div>12:53 PM</div>
          <div>1/4/2017</div>
        </div>
        <button aria-label="Show desktop" className="mr-px ml-3 h-[38px] w-[13px] border border-[#6d7379] bg-linear-to-b from-[#30353a] to-[#090c10]" />
      </div>
    </div>
  );
}

export default function App() {
  return (
    <div className="flex min-h-screen flex-col bg-[#494949] font-['Liberation_Sans',Arial,sans-serif]">
      <BrowserTop />
      <MenuAndFavorites />
      <main className="relative flex flex-1 flex-col">
        <RepairForm />
        <Logos />
        <SiteFooter />
        <Scrollbar />
      </main>
      <Taskbar />
    </div>
  );
}
